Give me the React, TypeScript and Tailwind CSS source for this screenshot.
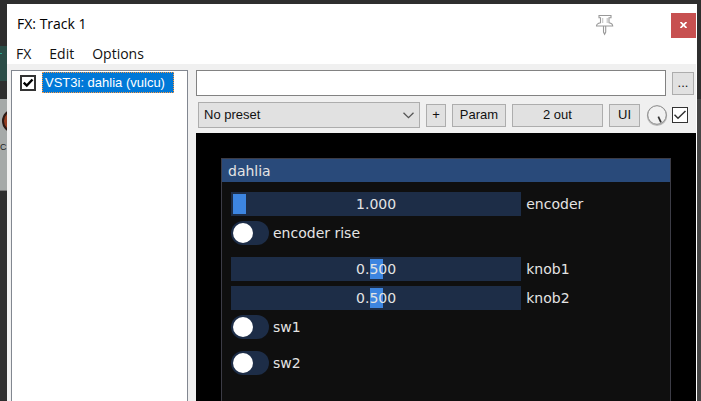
import { useState } from "react";
import type { ReactNode } from "react";

const buttonClass =
  "flex h-[23px] shrink-0 items-center justify-center border border-[#adadad] bg-[#e1e1e1] font-['Liberation_Sans',sans-serif] text-[13px] leading-4 text-[#111]";

function HostButton({ width, label, children }: { width: string; label?: string; children: ReactNode }) {
  return (
    <button type="button" aria-label={label} className={`${buttonClass} ${width}`}>
      {children}
    </button>
  );
}

function SliderRow({ name, min, initial }: { name: string; min: number; initial: number }) {
  const [value, setValue] = useState(initial);
  return (
    <div className="flex items-center gap-[5px]">
      <div className="relative h-6 w-[67.5%]">
        <input
          id={name}
          type="range"
          min={min}
          max={min + 1}
          step={0.001}
          value={value}
          onChange={(e) => setValue(Number(e.target.value))}
          className="block h-6 w-full appearance-none bg-[#1d2d47] px-0.5 outline-none [&::-webkit-slider-thumb]:h-5 [&::-webkit-slider-thumb]:w-[13px] [&::-webkit-slider-thumb]:appearance-none [&::-webkit-slider-thumb]:bg-[#3d85e0]"
        />
        <output
          htmlFor={name}
          className="pointer-events-none absolute inset-0 flex items-center justify-center"
        >
          {value.toFixed(3)}
        </output>
      </div>
      <label htmlFor={name}>{name}</label>
    </div>
  );
}

function ToggleRow({ name }: { name: string }) {
  return (
    <label className="flex h-6 items-center gap-1">
      <input
        type="checkbox"
        className="flex h-6 w-[38px] shrink-0 appearance-none items-center rounded-full bg-[#1d2d47] px-0.5 before:size-5 before:rounded-full before:bg-white checked:justify-end checked:bg-[#3d85e0]"
      />
      {name}
    </label>
  );
}

function LeftBackdrop() {
  return (
    <div className="w-[7px] shrink-0 overflow-hidden pt-[46px]">
      <div className="h-[35px] bg-[#2b4d47] pt-[7px]">
        <div className="h-px w-0.5 bg-[#2aa58d]" />
      </div>
      <div className="mt-[18px] h-[92px] overflow-hidden border-b border-[#777] bg-[#a5a9a8] pt-2.5">
        <div className="ml-0.5 h-6 w-6 rounded-full border-2 border-[#2c1a16] bg-[#943d22]" />
        <div className="mt-1.5 font-['Liberation_Sans',sans-serif] text-[9px] leading-4 text-[#222]">C</div>
      </div>
    </div>
  );
}

function PinIcon() {
  return (
    <svg width="20" height="22" viewBox="0 0 20 22" fill="none" stroke="#999" strokeWidth="1.1" aria-hidden="true">
      <path d="M4 1.5h12v2.3h-2v5c2.4.5 3.7 1.6 3.7 3.2H1.5c0-1.6 1.5-2.7 4-3.2v-5H4z" fill="#fff" />
      <path d="M7.7 4v5M12.2 4v5" stroke="#c4c4c4" />
      <path d="M8.5 12v6l1.1 2.2 1.1-2.2v-6" />
    </svg>
  );
}

export default function App() {
  return (
    <div className="flex min-h-screen overflow-hidden bg-[#2e2e2e]">
      <LeftBackdrop />

      <main className="mt-1 flex min-w-0 flex-1 flex-col bg-[#f0f0f0] font-['Open_Sans',sans-serif] text-[14px] text-[#111]">
        <header className="flex h-[38px] items-center bg-white pr-px pl-2.5">
          <h1 className="flex-1 text-black">FX: Track 1</h1>
          <button type="button" aria-label="Pin window" className="mr-14 mt-1">
            <PinIcon />
          </button>
          <button
            type="button"
            aria-label="Close"
            className="mt-1 flex h-[25px] w-[25px] items-center justify-center bg-[#c75050]"
          >
            <svg width="7" height="6" viewBox="0 0 7 6" stroke="#fff" strokeWidth="1.7" aria-hidden="true">
              <path d="M.5 0 6.5 6M6.5 0 .5 6" />
            </svg>
          </button>
        </header>

        <nav className="flex h-[22px] items-center gap-[18px] bg-white pl-[9px]">
          <button type="button">FX</button>
          <button type="button">Edit</button>
          <button type="button">Options</button>
        </nav>

        <div className="flex flex-1 gap-2 border-r border-white pt-1.5 pl-1">
          <section className="w-[177px] shrink-0 border border-b-0 border-[#828790] bg-white pt-px pl-2 font-['Liberation_Sans',sans-serif] text-[13px] leading-4">
            <div className="flex items-center gap-1.5">
              <span className="relative flex size-4">
                <input
                  id="fx-enabled"
                  type="checkbox"
                  defaultChecked
                  className="peer size-4 appearance-none border-2 border-[#333] bg-white"
                />
                <svg
                  className="pointer-events-none absolute inset-0 hidden peer-checked:block"
                  viewBox="0 0 16 16"
                  fill="none"
                  stroke="#000"
                  strokeWidth="2.4"
                  aria-hidden="true"
                >
                  <path d="M3.7 7.6 6.8 10.6 12.5 4.5" />
                </svg>
              </span>
              <label
                htmlFor="fx-enabled"
                className="flex h-[21px] w-[132px] items-center border border-dotted border-[#ff9a40] bg-[#0078d7] pl-0.5 whitespace-nowrap text-white"
              >
                VST3i: dahlia (vulcu)
              </label>
            </div>
          </section>

          <section className="flex min-w-0 flex-1 flex-col">
            <div className="flex items-center gap-1.5 pr-0.5">
              <input
                type="text"
                aria-label="FX comment"
                className="h-[26px] min-w-0 flex-1 border border-[#828282] bg-white px-1 outline-none"
              />
              <HostButton width="w-[22px]" label="More options">
                ...
              </HostButton>
            </div>

            <div className="flex items-center gap-1.5 pt-1.5 pr-2 pb-[5px] pl-0.5">
              <div className="relative min-w-0 flex-1">
                <select
                  aria-label="Preset"
                  className="block h-[26px] w-full appearance-none border border-[#adadad] bg-[#e1e1e1] pl-[5px] font-['Liberation_Sans',sans-serif] text-[13px] text-[#111] outline-none"
                >
                  <option>No preset</option>
                </select>
                <svg
                  className="pointer-events-none absolute top-[10px] right-1.5"
                  width="11"
                  height="7"
                  viewBox="0 0 11 7"
                  fill="none"
                  stroke="#555"
                  strokeWidth="1.3"
                  aria-hidden="true"
                >
                  <path d="M.5.7 5.5 5.7 10.5.7" />
                </svg>
              </div>
              <HostButton width="w-5" label="Preset menu">
                +
              </HostButton>
              <HostButton width="w-[54px]">Param</HostButton>
              <HostButton width="w-[91px]">2 out</HostButton>
              <HostButton width="w-[31px]">UI</HostButton>
              <div className="flex shrink-0 items-center gap-1">
                <button type="button" aria-label="Wet/dry mix">
                  <svg width="22" height="22" viewBox="0 0 22 22" fill="none" className="block" aria-hidden="true">
                    <circle cx="11" cy="11.8" r="9.4" stroke="#bbb" strokeWidth="1.5" />
                    <circle cx="11" cy="11" r="9.3" fill="#f1f1f1" stroke="#888" />
                    <path d="M12.3 12.7 15 18.3" stroke="#333" strokeWidth="1.7" />
                  </svg>
                </button>
                <span className="relative flex size-4">
                  <input
                    type="checkbox"
                    aria-label="Bypass toggle"
                    defaultChecked
                    className="peer size-4 appearance-none border border-[#333] bg-white"
                  />
                  <svg
                    className="pointer-events-none absolute inset-0 hidden peer-checked:block"
                    viewBox="0 0 16 16"
                    fill="none"
                    stroke="#333"
                    strokeWidth="1.5"
                    aria-hidden="true"
                  >
                    <path d="M2.5 7.8 6 11.3 13.5 4" />
                  </svg>
                </span>
              </div>
            </div>

            <div className="flex flex-1 bg-black px-[25px] pt-[25px]">
              <div className="min-w-0 flex-1 border border-b-0 border-[#3c3c46] bg-[#0f0f0f] font-['DejaVu_Sans',sans-serif] text-[14px] leading-4 text-[#e4e4e4]">
                <h2 className="flex h-[23px] items-center bg-[#294a7a] pl-1.5">dahlia</h2>
                <div className="flex flex-col gap-[5px] px-[9px] py-2.5">
                  <SliderRow name="encoder" min={1} initial={1} />
                  <ToggleRow name="encoder rise" />
                  <div className="flex flex-col gap-[5px] pt-[7px]">
                    <SliderRow name="knob1" min={0} initial={0.5} />
                    <SliderRow name="knob2" min={0} initial={0.5} />
                  </div>
                  <div className="flex flex-col gap-3">
                    <ToggleRow name="sw1" />
                    <ToggleRow name="sw2" />
                  </div>
                </div>
              </div>
            </div>
          </section>
        </div>
      </main>

      <div className="w-1 shrink-0 pt-[99px]">
        <div className="h-full bg-[#454545]" />
      </div>
    </div>
  );
}
